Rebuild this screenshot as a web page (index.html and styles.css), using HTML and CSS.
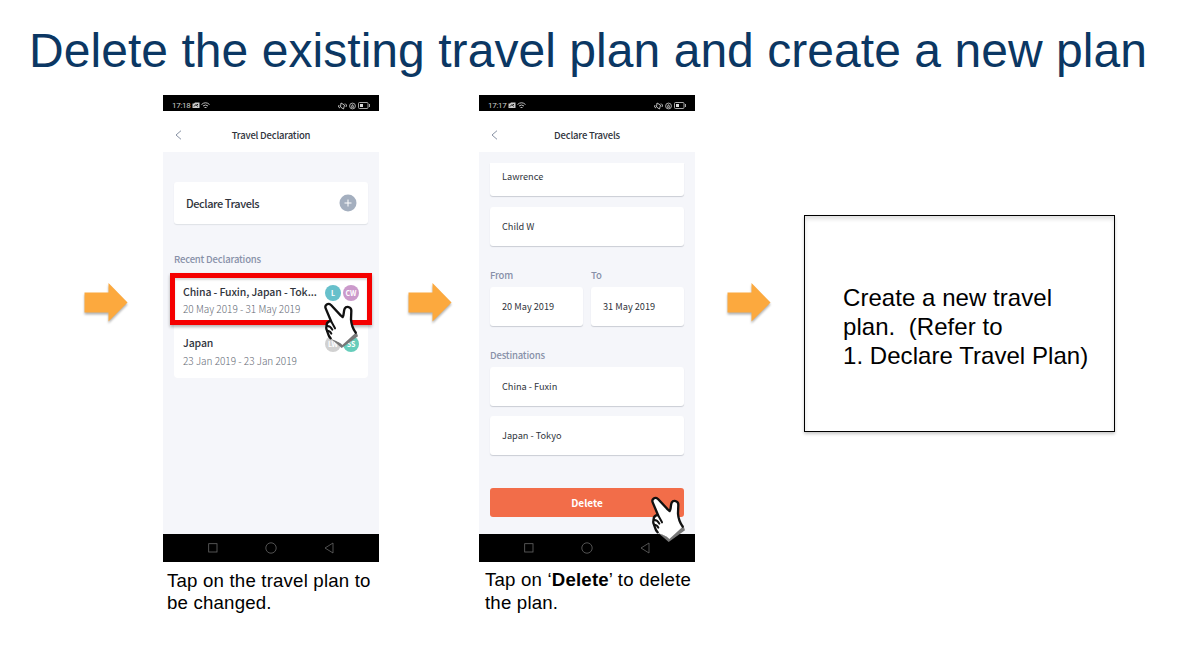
FILE: index.html
```html
<!DOCTYPE html>
<html lang="en">
<head>
<meta charset="utf-8">
<title>Delete the existing travel plan</title>
<link rel="stylesheet" href="styles.css">
</head>
<body>
<svg class="defs" width="0" height="0" aria-hidden="true">
  <symbol id="arrow" viewBox="0 0 44 41"><path d="M0.5 10.5H24.5V1L43.5 20.5L24.5 39.500V30.500H0.500Z" fill="#fca93e"/></symbol>
  <symbol id="hand" viewBox="0 0 102 138">
    <path d="M14 104L53 138L102 103L97 88L50 123Z" fill="#777"/>
    <path d="M5 19C1 9 12 1 21 9L50 40L56 45C61 38 58 28 62 20C67 11 82 14 82 26L81 53C82 68 88 82 95 92L55 129C46 118 31 117 20 109C11 101 12 92 9 86C5 79 6 77 8 72C7 63 13 58 21 57Z" fill="#fff"/>
    <path d="M95 92C88 82 82 68 81 53L82 26C82 14 67 11 62 20C58 28 61 38 56 45L50 40L21 9C12 1 1 9 5 19L21 57C13 58 7 63 8 72C6 77 5 79 9 86C12 92 11 101 20 109" fill="none" stroke="#111" stroke-width="7" stroke-linejoin="round" stroke-linecap="round"/>
    <path d="M21 57L33 79M8 72C17 71 22 77 25 83M9 86C15 86 20 90 22 95" fill="none" stroke="#111" stroke-width="6" stroke-linecap="round"/>
  </symbol>
  <symbol id="camera" viewBox="0 0 8 7"><path d="M0.500 1.500H2L3 .5H7.500V6H.5Z" fill="#ccc"/><path d="M2 4.500L4 2.500L5.500 4.500M5 2.500H6" stroke="#111" fill="none"/></symbol>
  <symbol id="wifi" viewBox="0 0 9 7"><path d="M.5 2.500Q4.500-1 8.500 2.500M2 4Q4.500 2 7 4M3.500 5.500H5.500" fill="none" stroke="#bbb"/></symbol>
  <symbol id="vibrate" viewBox="0 0 9 8"><path d="M3 1L6.500 3L5.500 7L2.500 5ZM1 3L.5 5L2 6M7 1.500L8.500 3L8 5" fill="none" stroke="#bbb"/></symbol>
  <symbol id="lock" viewBox="0 0 7 8"><circle cx="3.500" cy="4" r="2.900" fill="none" stroke="#bbb" stroke-width=".9"/><path d="M2.500 4H4.500V5.500H2.500ZM3 4V2.800H4V4" fill="none" stroke="#bbb" stroke-width=".7"/></symbol>
  <symbol id="battery" viewBox="0 0 12 7"><rect x=".5" y=".5" width="9.500" height="6" rx="1" fill="none" stroke="#bbb" stroke-width=".9"/><path d="M2 2H5V5H2Z" fill="#ddd"/><path d="M11.500 2V5" stroke="#aaa"/></symbol>
  <symbol id="back" viewBox="0 0 7 10"><path d="M6 .7L1 5L6 9.300" fill="none" stroke="#8791a3" stroke-width="1"/></symbol>
  <symbol id="square" viewBox="0 0 10 10"><rect x=".7" y=".7" width="8.300" height="8.300" fill="none" stroke="#666" stroke-width=".8"/></symbol>
  <symbol id="circle" viewBox="0 0 12 12"><circle cx="6" cy="6" r="5.200" fill="none" stroke="#666" stroke-width=".8"/></symbol>
  <symbol id="triangle" viewBox="0 0 10 12"><path d="M9 1V11L1 6Z" fill="none" stroke="#666" stroke-width=".8"/></symbol>
</svg>
<main class="slide">
  <h1 class="title"><span>Delete the existing travel plan and create a new plan</span></h1>
  <div class="steps">
    <svg class="arrow"><use href="#arrow"/></svg>
    <section class="step step-one">
      <div class="phone">
        <div class="status"><span class="time">17:18</span><svg class="camera"><use href="#camera"/></svg><svg class="wifi"><use href="#wifi"/></svg><svg class="vibrate"><use href="#vibrate"/></svg><svg class="lock"><use href="#lock"/></svg><svg class="battery"><use href="#battery"/></svg></div>
        <header class="appbar"><svg class="back"><use href="#back"/></svg><b class="declaration">Travel Declaration</b></header>
        <div class="screen overview">
          <div class="card declare"><span>Declare Travels</span><svg class="plus" viewBox="0 0 18 18"><circle cx="9" cy="9" r="8.500" fill="#a4afbf"/><path d="M5.500 9H12.500M9 5.500V12.500" stroke="#fff"/></svg></div>
          <div class="label recent">Recent Declarations</div>
          <div class="trips">
            <div class="trip selected">
              <div><p class="place"><span>China - Fuxin, Japan - Tok...</span></p><p class="date"><span>20 May 2019 - 31 May 2019</span></p></div>
              <div class="avatars"><i class="teal">L</i><i class="pink">CW</i></div>
              <svg class="hand"><use href="#hand"/></svg>
            </div>
            <div class="trip">
              <div><p class="place"><span>Japan</span></p><p class="date"><span>23 Jan 2019 - 23 Jan 2019</span></p></div>
              <div class="avatars"><i class="grey">LW</i><i class="mint">SS</i></div>
            </div>
          </div>
        </div>
        <footer class="nav"><svg class="square"><use href="#square"/></svg><svg class="circle"><use href="#circle"/></svg><svg class="triangle"><use href="#triangle"/></svg></footer>
      </div>
      <p class="caption">Tap on the travel plan to<br>be changed.</p>
    </section>
    <svg class="arrow second"><use href="#arrow"/></svg>
    <section class="step step-two">
      <div class="phone">
        <div class="status"><span class="time">17:17</span><svg class="camera"><use href="#camera"/></svg><svg class="wifi"><use href="#wifi"/></svg><svg class="vibrate"><use href="#vibrate"/></svg><svg class="lock"><use href="#lock"/></svg><svg class="battery"><use href="#battery"/></svg></div>
        <header class="appbar"><svg class="back"><use href="#back"/></svg><b>Declare Travels</b></header>
        <div class="screen form">
          <div class="card field first">Lawrence</div>
          <div class="card field">Child W</div>
          <div class="dates">
            <div><div class="label">From</div><div class="card field">20 May 2019</div></div>
            <div><div class="label">To</div><div class="card field">31 May 2019</div></div>
          </div>
          <div class="label destinations">Destinations</div>
          <div class="card field">China - Fuxin</div>
          <div class="card field last">Japan - Tokyo</div>
          <div class="delete">Delete<svg class="hand"><use href="#hand"/></svg></div>
        </div>
        <footer class="nav"><svg class="square"><use href="#square"/></svg><svg class="circle"><use href="#circle"/></svg><svg class="triangle"><use href="#triangle"/></svg></footer>
      </div>
      <p class="caption second-caption">Tap on ‘<b>Delete</b>’ to delete<br>the plan.</p>
    </section>
    <svg class="arrow third"><use href="#arrow"/></svg>
    <div class="note"><p>Create a new travel<br>plan.&nbsp; (Refer to<br>1. Declare Travel Plan)</p></div>
  </div>
</main>
</body>
</html>
```
FILE: styles.css
```css
* { box-sizing: border-box; }
body { margin: 0; background: #fff; color: #000; font-family: "Liberation Sans", Arial, sans-serif; }
p, h1 { margin: 0; }
svg { display: block; flex: none; }
.defs { position: absolute; }
.slide { width: 1183px; height: 672px; overflow: hidden; }
.title { height: 95px; padding: 23px 0 0 29px; font-size: 48px; line-height: 56px; font-weight: 400; color: #0b3763; white-space: nowrap; letter-spacing: .05px; }
.steps { display: flex; align-items: flex-start; padding-left: 84px; }
.arrow { width: 44px; height: 41px; margin-top: 187px; filter: drop-shadow(0 2px 1px rgba(0,0,0,.3)); }
.step { width: 216px; flex: none; }
.step-one { margin-left: 35px; }
.second { margin-left: 29px; }
.step-two { margin-left: 27px; }
.third { margin-left: 32px; }
.note { width: 311px; height: 217px; margin: 120px 0 0 33px; border: 1px solid #000; padding: 67px 0 0 38px; font-size: 24px; line-height: 29px; letter-spacing: .05px; white-space: nowrap; box-shadow: 0 2px 3px rgba(0,0,0,.22), inset 0 3px 4px rgba(0,0,0,.13); }
.phone { height: 467px; display: flex; flex-direction: column; font-family: "Noto Sans CJK SC", "Noto Sans", sans-serif; white-space: nowrap; }
.status { height: 16px; background: #000; color: #ccc; display: flex; align-items: center; padding: 5px 9px 0 9px; font: 8px/10px Roboto, sans-serif; }
.time { letter-spacing: -.3px; }
.camera { width: 8px; height: 7px; margin-left: 2px; }
.wifi { width: 9px; height: 7px; margin-left: 1px; }
.vibrate { width: 9px; height: 8px; margin-left: auto; }
.lock { width: 7px; height: 8px; margin-left: 2px; }
.battery { width: 12px; height: 7px; margin-left: 2px; }
.appbar { height: 41px; display: flex; align-items: center; padding: 6px 12px 0; color: #30343c; font-size: 9.5px; line-height: 14px; letter-spacing: -.2px; }
.appbar b { flex: 1; text-align: center; margin-right: 7px; font-weight: 500; }
.back { width: 7px; height: 10px; }
.screen { flex: 1; background: #f5f6fa; padding: 0 11px; }
.card { background: #fff; border-radius: 3px; box-shadow: 0 1px 1px rgba(60,70,90,.23); }
.overview { padding-top: 30px; }
.declare { height: 42px; display: flex; align-items: center; justify-content: space-between; padding: 0 11px 0 12px; font-size: 11px; line-height: 16px; color: #30343c; font-weight: 500; letter-spacing: -.43px; box-shadow: 0 1px 1px rgba(60,70,90,.12); }
.plus { width: 18px; height: 18px; }
.label { color: #8790a8; font-size: 9.5px; line-height: 14px; font-weight: 500; letter-spacing: -.18px; }
.recent { margin-top: 28px; }
.trips { background: #fff; height: 105px; margin-top: 7px; border-radius: 4px; }
.trip { display: flex; justify-content: space-between; height: 52px; padding: 10px 9px 0 9px; }
.selected { position: relative; border: 5px solid #f50000; width: 202px; margin-left: -4px; padding: 6px 8px 0 8px; box-shadow: 0 2px 3px rgba(0,0,0,.3), inset 0 2px 2px rgba(0,0,0,.15); z-index: 1; }
.place { font-size: 10.5px; line-height: 16px; color: #30343c; font-weight: 500; letter-spacing: -.12px; }
.date { font-size: 10px; line-height: 15px; margin-top: 2px; color: #626873; font-weight: 300; }
.selected .date { margin-top: 1px; }
.avatars { display: flex; gap: 2px; padding-top: 1px; }
.avatars i { width: 16px; height: 16px; border-radius: 50%; color: #fff; font-size: 7px; line-height: 16px; font-style: normal; font-weight: 700; text-align: center; }
.teal { background: #67c0cb; }
.pink { background: #cb9acb; }
.grey { background: #d1d1d1; }
.mint { background: #66cdbb; }
.hand { position: absolute; width: 34px; height: 46px; }
.selected .hand { left: 149px; top: 24px; }
.nav { height: 28px; background: #000; display: flex; align-items: center; padding-left: 45px; }
.square { width: 10px; height: 10px; }
.circle { width: 12px; height: 12px; margin-left: 47px; }
.triangle { width: 10px; height: 12px; margin-left: 47px; }
.caption { font-size: 18.67px; line-height: 22px; letter-spacing: .18px; padding: 8px 0 0 4px; white-space: nowrap; }
.second-caption { padding: 6px 0 0 6px; line-height: 23px; }
.form { padding-top: 11px; }
.field { height: 39px; padding-left: 12px; color: #30343c; font-size: 9.2px; line-height: 39px; margin-bottom: 10px; }
.field.first { height: 33px; line-height: 26px; border-radius: 0 0 3px 3px; margin-bottom: 11px; }
.dates { display: grid; grid-template-columns: 93px 93px; gap: 8px; margin-top: 22px; }
.dates .field { margin: 5px 0 0; }
.destinations { margin: 22px 0 5px; }
.last { margin-bottom: 0; }
.delete { position: relative; margin-top: 33px; height: 29px; border-radius: 3px; background: #f26d49; color: #fff; font-size: 10px; line-height: 29px; font-weight: 700; text-align: center; }
.delete .hand { left: 161px; top: 8px; }
```
